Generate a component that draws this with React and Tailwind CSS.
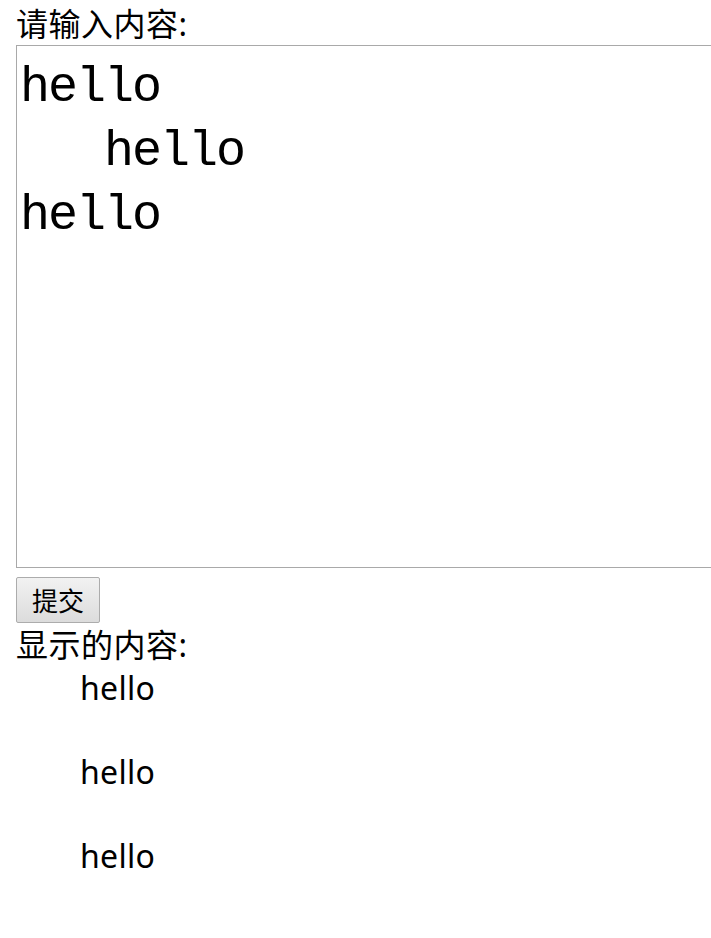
import React, { useState } from "react";

const initialText = "hello\n   hello\nhello";

const App = () => {
    const [text, setText] = useState(initialText);
    const [shown, setShown] = useState(initialText);

    // each line is shown as its own paragraph, trimmed
    const lines = shown.split("\n").map((l) => l.trim()).filter(Boolean);

    return (
        <div className="w-full min-h-[938px] overflow-hidden bg-white text-black font-['Noto_Sans','Noto_Sans_CJK_SC',sans-serif] text-[32px]">
            <div className="pl-4">

                {/* Input */}
                <div className="h-[45px] leading-[42px] pt-[3px] tracking-[0.5px]">请输入内容:</div>
                <textarea
                    value={text}
                    onChange={(e) => setText(e.target.value)}
                    className="block w-[760px] h-[523px] border border-[#a9a9a9] bg-white pl-[3px] pt-[10px] font-['Liberation_Mono',monospace] text-[50px] tracking-[-2px] leading-[64px] resize-none outline-none"
                />

                {/* Submit */}
                <button
                    onClick={() => setShown(text)}
                    className="mt-[9px] block w-[84px] h-[46px] rounded-[2px] border border-[#acacac] bg-gradient-to-b from-[#f2f2f2] to-[#dcdcdc] text-[26px] leading-none font-['Noto_Sans_CJK_SC',sans-serif]"
                >
                    提交
                </button>

                {/* Output */}
                <div className="leading-[42px] pt-[1px] tracking-[0.5px]">显示的内容:</div>
                <div className="mt-[1px]">
                    {lines.map((line, i) => (
                        <p key={i} className="indent-[2em] leading-[42px] mb-[42px] tracking-[0.3px]">{line}</p>
                    ))}
                </div>

            </div>
        </div>
    );
};

export default App;
